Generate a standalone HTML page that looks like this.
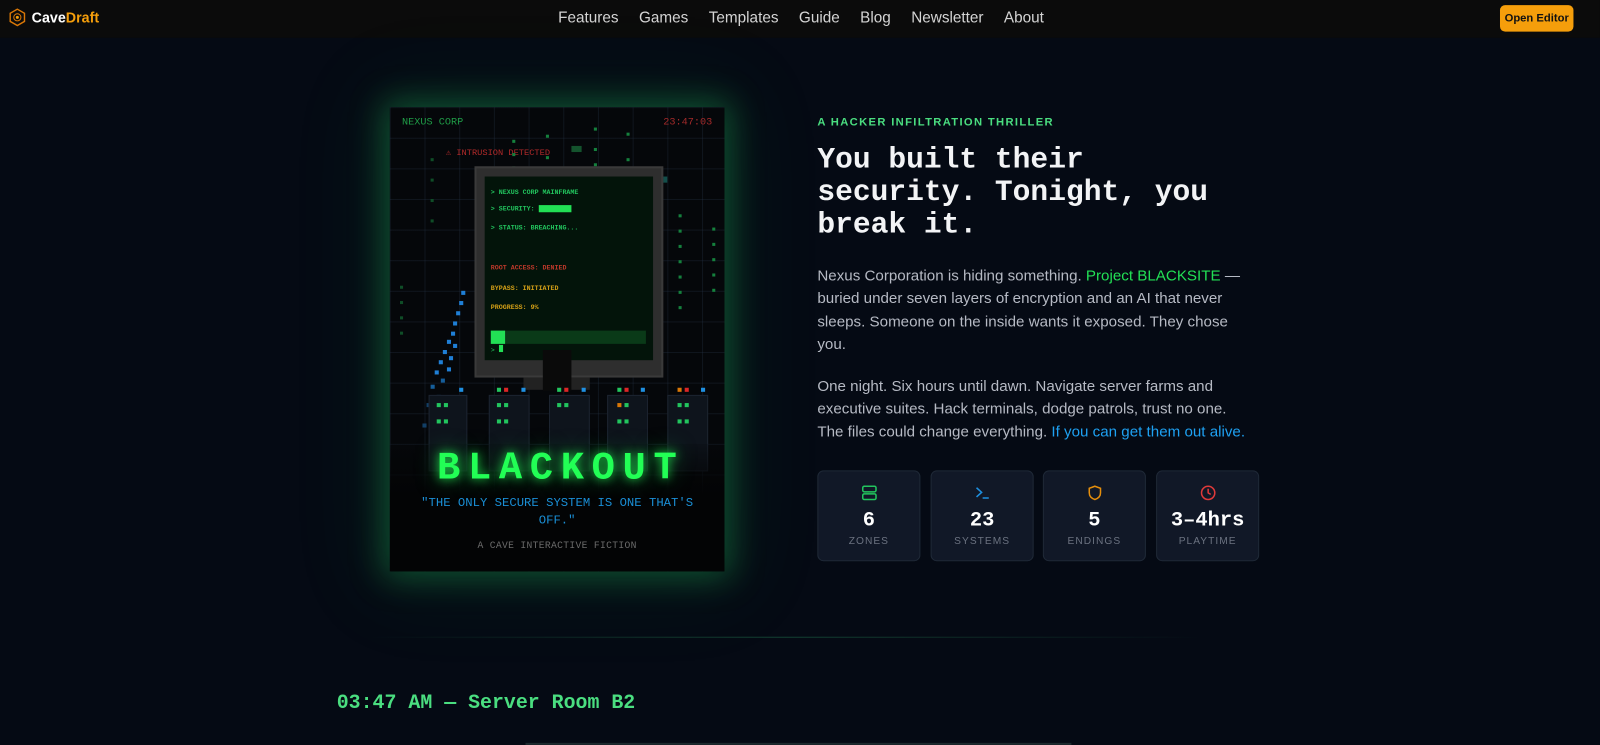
<!DOCTYPE html>
<html><head><meta charset="utf-8"><style>
*{margin:0;padding:0;box-sizing:border-box}
html,body{width:1600px;height:745px;overflow:hidden;background:#050a14}
body{font-family:"Liberation Sans",sans-serif;position:relative}
#w{position:absolute;left:0;top:0;width:1568px;height:730px;transform:scale(1.0204);transform-origin:0 0}
.nav{position:absolute;left:0;top:0;width:1568px;height:37px;background:#0b0b0b}
.logo{position:absolute;left:8px;top:8px;display:flex;align-items:center;gap:5px;font-weight:bold;font-size:14px;color:#fff}
.links{position:absolute;left:547px;top:9px;font-size:15px;color:#d4d4d4;display:flex;gap:20px}
.btn{position:absolute;left:1470px;top:5px;width:72px;height:26px;background:#f59e0b;border-radius:5px;font-size:11px;font-weight:bold;color:#111;text-align:center;line-height:26px}
.mono{font-family:"Liberation Mono","DejaVu Sans Mono",monospace}
.cover{position:absolute;left:382px;top:105px;width:328px;height:455px;box-shadow:0 0 30px 6px rgba(34,197,94,.35),0 0 80px 20px rgba(34,197,94,.08);overflow:hidden;
background-image:linear-gradient(rgba(40,55,75,.3) 1px,transparent 1px),linear-gradient(90deg,rgba(40,55,75,.3) 1px,transparent 1px);background-size:34px 30px;background-color:#05070a}
.a{position:absolute}
.d{position:absolute;width:3px;height:3px;background:#15803d}
.b{position:absolute;width:4px;height:4px;background:#1f7fd6}
.l{position:absolute;width:4px;height:4px}
.rack{position:absolute;top:282px;height:75px;background:#0e141c;border:1px solid #1c2430}
.stat{position:absolute;top:461px;width:101px;height:89px;background:#111827;border:1px solid #1f2937;border-radius:6px;text-align:center}
.stat .n{position:absolute;top:37px;width:100%;font-family:"Liberation Mono",monospace;font-weight:bold;font-size:20px;color:#fff}
.stat .t{position:absolute;top:63px;width:100%;font-size:10px;letter-spacing:1px;color:#6b7280}
.stat svg{position:absolute;left:42px;top:13px}
p.body{position:absolute;left:801px;width:422px;font-size:14.85px;line-height:22.4px;color:#b6bac4}
</style></head><body><div id="w">
<div class="nav">
 <div class="logo"><svg width="18" height="18" viewBox="0 0 18 18"><polygon points="9,1 16,5 16,13 9,17 2,13 2,5" fill="none" stroke="#d97706" stroke-width="1.4"/><circle cx="9" cy="9" r="3.5" fill="none" stroke="#d97706" stroke-width="1"/><circle cx="9" cy="9" r="1.5" fill="#f59e0b"/></svg><span>Cave<span style="color:#f59e0b">Draft</span></span></div>
 <div class="links"><span>Features</span><span>Games</span><span>Templates</span><span>Guide</span><span>Blog</span><span>Newsletter</span><span>About</span></div>
 <div class="btn">Open Editor</div>
</div>

<div class="cover mono">
 <div class="a" style="left:12px;top:10px;font-size:10px;color:#1f9d47">NEXUS CORP</div>
 <div class="a" style="right:12px;top:10px;font-size:10px;color:#a32a2a">23:47:03</div>
 <div class="a" style="left:55px;top:40px;font-size:8.5px;color:#b32a2a">⚠ INTRUSION DETECTED</div>
 <div class="d" style="left:120px;top:32px"></div><div class="d" style="left:120px;top:45px"></div><div class="d" style="left:120px;top:58px"></div>
 <div class="d" style="left:153px;top:27px"></div><div class="d" style="left:153px;top:48px"></div>
 <div class="d" style="left:200px;top:20px"></div><div class="d" style="left:200px;top:40px"></div><div class="d" style="left:200px;top:55px"></div>
 <div class="d" style="left:232px;top:25px"></div><div class="d" style="left:232px;top:50px"></div>
 <div class="d" style="left:283px;top:105px"></div><div class="d" style="left:283px;top:120px"></div><div class="d" style="left:283px;top:135px"></div><div class="d" style="left:283px;top:150px"></div><div class="d" style="left:283px;top:165px"></div><div class="d" style="left:283px;top:180px"></div><div class="d" style="left:283px;top:195px"></div>
 <div class="d" style="left:316px;top:118px"></div><div class="d" style="left:316px;top:133px"></div><div class="d" style="left:316px;top:148px"></div><div class="d" style="left:316px;top:163px"></div><div class="d" style="left:316px;top:178px"></div>
 <div class="d" style="left:40px;top:50px;background:#0f4d27"></div><div class="d" style="left:40px;top:70px;background:#0f4d27"></div><div class="d" style="left:40px;top:90px;background:#0f4d27"></div><div class="d" style="left:40px;top:110px;background:#0f4d27"></div>
 <div class="d" style="left:10px;top:175px;background:#0f4d27"></div><div class="d" style="left:10px;top:190px;background:#0f4d27"></div><div class="d" style="left:10px;top:205px;background:#0f4d27"></div><div class="d" style="left:10px;top:220px;background:#0f4d27"></div>
 <div class="a" style="left:178px;top:38px;width:10px;height:6px;background:#14532d"></div>
 <div class="a" style="left:262px;top:68px;width:10px;height:6px;background:#134e4a"></div>
 <div class="b" style="left:70px;top:180px"></div><div class="b" style="left:68px;top:190px"></div><div class="b" style="left:65px;top:200px"></div><div class="b" style="left:62px;top:210px"></div><div class="b" style="left:60px;top:220px"></div><div class="b" style="left:56px;top:228px"></div><div class="b" style="left:62px;top:232px"></div><div class="b" style="left:52px;top:238px"></div><div class="b" style="left:58px;top:244px"></div><div class="b" style="left:48px;top:248px"></div><div class="b" style="left:56px;top:255px"></div><div class="b" style="left:44px;top:258px"></div><div class="b" style="left:50px;top:266px;background:#155e9a"></div><div class="b" style="left:40px;top:272px;background:#155e9a"></div><div class="b" style="left:46px;top:282px;background:#155e9a"></div><div class="b" style="left:36px;top:290px;background:#123f66"></div><div class="b" style="left:42px;top:300px;background:#123f66"></div><div class="b" style="left:32px;top:310px;background:#123f66"></div>
 <div class="a" style="left:83px;top:58px;width:185px;height:207px;background:#2e2e2e;border:2px solid #3a3a3a"></div>
 <div class="a" style="left:93px;top:68px;width:165px;height:180px;background:#03140a"></div>
 <div class="a" style="left:99px;top:79px;font-size:6.5px;color:#22c55e;font-weight:bold;line-height:9px">&gt; NEXUS CORP MAINFRAME</div>
 <div class="a" style="left:99px;top:96px;font-size:6.5px;color:#22c55e;font-weight:bold">&gt; SECURITY: <span style="display:inline-block;width:32px;height:7px;background:#22e055;vertical-align:middle"></span></div>
 <div class="a" style="left:99px;top:115px;font-size:6.5px;color:#22c55e;font-weight:bold">&gt; STATUS: BREACHING...</div>
 <div class="a" style="left:99px;top:154px;font-size:6.5px;color:#c0392b;font-weight:bold">ROOT ACCESS: DENIED</div>
 <div class="a" style="left:99px;top:174px;font-size:6.5px;color:#d4a017;font-weight:bold">BYPASS: INITIATED</div>
 <div class="a" style="left:99px;top:193px;font-size:6.5px;color:#d4a017;font-weight:bold">PROGRESS: 9%</div>
 <div class="a" style="left:99px;top:219px;width:152px;height:13px;background:#0a3a18"></div>
 <div class="a" style="left:99px;top:219px;width:14px;height:13px;background:#22e055"></div>
 <div class="a" style="left:99px;top:233px;font-size:6.5px;color:#22c55e">&gt; <span style="display:inline-block;width:4px;height:7px;background:#22e055"></span></div>
 <div class="a" style="left:131px;top:265px;width:65px;height:12px;background:#222"></div>
 <div class="a" style="left:150px;top:238px;width:28px;height:40px;background:#0a0a0a"></div>
 <div class="rack" style="left:38px;width:38px"></div>
 <div class="rack" style="left:97px;width:40px"></div>
 <div class="rack" style="left:156px;width:40px"></div>
 <div class="rack" style="left:213px;width:40px"></div>
 <div class="rack" style="left:272px;width:40px"></div>
 <div class="l" style="left:46px;top:290px;background:#22c55e"></div><div class="l" style="left:53px;top:290px;background:#22c55e"></div><div class="l" style="left:46px;top:306px;background:#22c55e"></div><div class="l" style="left:53px;top:306px;background:#22c55e"></div><div class="l" style="left:68px;top:275px;background:#1f8fe0"></div>
 <div class="l" style="left:105px;top:275px;background:#22c55e"></div><div class="l" style="left:112px;top:275px;background:#dc2626"></div><div class="l" style="left:129px;top:275px;background:#1f8fe0"></div><div class="l" style="left:105px;top:290px;background:#22c55e"></div><div class="l" style="left:112px;top:290px;background:#22c55e"></div><div class="l" style="left:105px;top:306px;background:#22c55e"></div><div class="l" style="left:112px;top:306px;background:#22c55e"></div>
 <div class="l" style="left:164px;top:275px;background:#22c55e"></div><div class="l" style="left:171px;top:275px;background:#dc2626"></div><div class="l" style="left:188px;top:275px;background:#1f8fe0"></div><div class="l" style="left:164px;top:290px;background:#22c55e"></div><div class="l" style="left:171px;top:290px;background:#22c55e"></div>
 <div class="l" style="left:223px;top:275px;background:#22c55e"></div><div class="l" style="left:230px;top:275px;background:#dc2626"></div><div class="l" style="left:246px;top:275px;background:#1f8fe0"></div><div class="l" style="left:223px;top:290px;background:#d97706"></div><div class="l" style="left:230px;top:290px;background:#22c55e"></div><div class="l" style="left:223px;top:306px;background:#22c55e"></div><div class="l" style="left:230px;top:306px;background:#22c55e"></div>
 <div class="l" style="left:282px;top:275px;background:#d97706"></div><div class="l" style="left:289px;top:275px;background:#dc2626"></div><div class="l" style="left:305px;top:275px;background:#1f8fe0"></div><div class="l" style="left:282px;top:290px;background:#22c55e"></div><div class="l" style="left:289px;top:290px;background:#22c55e"></div><div class="l" style="left:282px;top:306px;background:#22c55e"></div><div class="l" style="left:289px;top:306px;background:#22c55e"></div>
 <div class="a" style="left:0;top:330px;width:328px;height:125px;background:linear-gradient(rgba(5,7,10,.2),#030405 40%)"></div>
 <div class="a" style="left:0;top:333px;width:328px;text-align:center;font-size:38px;font-weight:bold;color:#22ff55;letter-spacing:7.5px;text-indent:7px;text-shadow:0 0 10px rgba(34,255,85,.8),0 0 22px rgba(34,200,85,.6)">BLACKOUT</div>
 <div class="a" style="left:18px;top:380px;width:292px;text-align:center;font-size:12px;line-height:17px;color:#1a8fd6">"THE ONLY SECURE SYSTEM IS ONE THAT'S OFF."</div>
 <div class="a" style="left:0;top:424px;width:328px;text-align:center;font-size:9.5px;color:#6b6b6b;letter-spacing:.3px">A CAVE INTERACTIVE FICTION</div>
</div>

<div class="a" style="left:801px;top:114px;font-size:11px;letter-spacing:1.3px;color:#4ade80;font-weight:bold">A HACKER INFILTRATION THRILLER</div>
<div class="a mono" style="left:801px;top:141px;width:420px;font-size:29px;line-height:32px;font-weight:bold;color:#f3f4f6">You built their security. Tonight, you break it.</div>
<p class="body" style="top:260px">Nexus Corporation is hiding something. <span style="color:#22e055">Project BLACKSITE</span> — buried under seven layers of encryption and an AI that never sleeps. Someone on the inside wants it exposed. They chose you.</p>
<p class="body" style="top:368px">One night. Six hours until dawn. Navigate server farms and executive suites. Hack terminals, dodge patrols, trust no one. The files could change everything. <span style="color:#1ea1f2">If you can get them out alive.</span></p>

<div class="stat" style="left:801px"><svg width="16" height="16" viewBox="0 0 16 16" fill="none" stroke="#22c55e" stroke-width="1.5"><rect x="1.5" y="1.5" width="13" height="5.5" rx="1.5"/><rect x="1.5" y="9" width="13" height="5.5" rx="1.5"/></svg><div class="n">6</div><div class="t">ZONES</div></div>
<div class="stat" style="left:912px"><svg width="16" height="16" viewBox="0 0 16 16" fill="none" stroke="#1e90e0" stroke-width="1.5"><path d="M2 3l5 4.5L2 12"/><path d="M8 13h6"/></svg><div class="n">23</div><div class="t">SYSTEMS</div></div>
<div class="stat" style="left:1022px"><svg width="16" height="16" viewBox="0 0 16 16" fill="none" stroke="#e58e0c" stroke-width="1.5"><path d="M8 1.5l5.5 2v4.5c0 3.5-2.5 5.5-5.5 6.5C5 13.5 2.5 11.5 2.5 8V3.5z"/></svg><div class="n">5</div><div class="t">ENDINGS</div></div>
<div class="stat" style="left:1133px"><svg width="16" height="16" viewBox="0 0 16 16" fill="none" stroke="#e03a3a" stroke-width="1.5"><circle cx="8" cy="8" r="6.5"/><path d="M8 4v4l2.5 1.5"/></svg><div class="n">3–4hrs</div><div class="t">PLAYTIME</div></div>

<div class="a" style="left:360px;top:624px;width:820px;height:1px;background:linear-gradient(90deg,transparent,rgba(34,120,80,.5),transparent)"></div>
<div class="a mono" style="left:330px;top:678px;font-size:19.5px;font-weight:bold;color:#4ade80">03:47 AM — Server Room B2</div>
<div class="a" style="left:515px;top:728px;width:535px;height:2px;background:#1c2a2e"></div>
</div></body></html>
